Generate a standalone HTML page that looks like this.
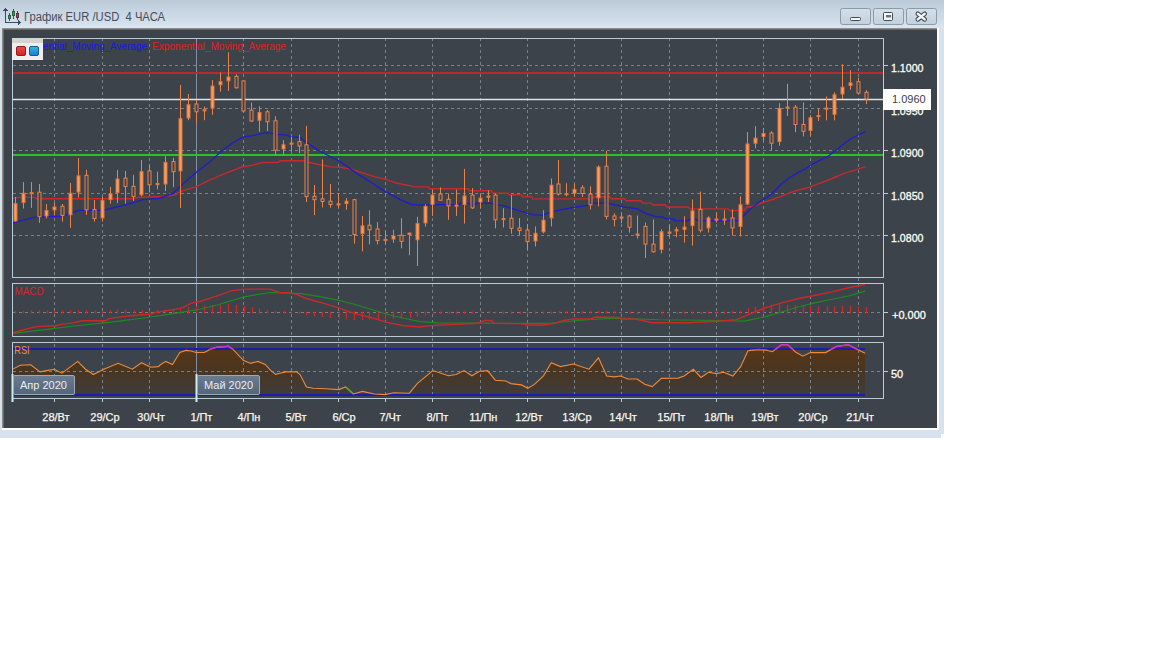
<!DOCTYPE html><html><head><meta charset="utf-8"><style>html,body{margin:0;padding:0;background:#fff;width:1152px;height:648px;overflow:hidden}svg{position:absolute;left:0;top:0}text{font-family:"Liberation Sans",sans-serif}</style></head><body>
<svg width="1152" height="648" viewBox="0 0 1152 648">
<defs><linearGradient id="tb" x1="0" y1="0" x2="0" y2="1"><stop offset="0" stop-color="#bccad8"/><stop offset="0.85" stop-color="#d4e0ec"/><stop offset="1" stop-color="#dbe7f1"/></linearGradient><linearGradient id="btn" x1="0" y1="0" x2="0" y2="1"><stop offset="0" stop-color="#d4dfe9"/><stop offset="1" stop-color="#c3d0dc"/></linearGradient><linearGradient id="rsif" x1="0" y1="0" x2="0" y2="1"><stop offset="0" stop-color="#5a3614"/><stop offset="0.5" stop-color="#4a3520"/><stop offset="1" stop-color="#3f3d3c"/></linearGradient><linearGradient id="lab" x1="0" y1="0" x2="0" y2="1"><stop offset="0" stop-color="#6a7b90"/><stop offset="1" stop-color="#566578"/></linearGradient><linearGradient id="sqr" x1="0" y1="0" x2="0" y2="1"><stop offset="0" stop-color="#f24a48"/><stop offset="1" stop-color="#d02028"/></linearGradient><linearGradient id="sqb" x1="0" y1="0" x2="0" y2="1"><stop offset="0" stop-color="#38b4ec"/><stop offset="1" stop-color="#1a80c0"/></linearGradient><clipPath id="cmain"><rect x="13" y="39" width="870" height="238"/></clipPath><clipPath id="cmacd"><rect x="13" y="284" width="870" height="52"/></clipPath><clipPath id="crsi"><rect x="13" y="343" width="870" height="55"/></clipPath></defs>
<rect x="0" y="0" width="944" height="434" fill="#d6e2ee"/><rect x="0" y="0" width="941" height="438" fill="#d6e2ee"/>
<rect x="0" y="0" width="944" height="28" fill="url(#tb)"/>
<rect x="2" y="28" width="937" height="402" fill="#ffffff"/>
<rect x="2" y="28" width="935" height="400" fill="#8e8c88"/>
<rect x="3" y="29" width="934" height="399" fill="#6a6864"/>
<rect x="4" y="30" width="933" height="398" fill="#3c434b"/>
<g fill="none" stroke-width="1" shape-rendering="crispEdges"><path d="M5.5 9 V22.5 H20" stroke="#3a4a60"/><path d="M3.5 11 L5.5 8.5 L7.5 11" stroke="#3a4a60"/><path d="M18 20.5 L20.5 22.5 L18 24.5" stroke="#3a4a60"/><path d="M9.5 13 V21" stroke="#2a6040"/><rect x="8.5" y="15.5" width="2" height="3" fill="#4a9a60" stroke="#2a6040"/><path d="M13.5 9 V19" stroke="#2a6040"/><rect x="12.5" y="11.5" width="2" height="4" fill="#4a9a60" stroke="#2a6040"/><path d="M17.5 11 V20" stroke="#603040"/><rect x="16.5" y="13.5" width="2" height="4" fill="#905060" stroke="#603040"/></g>
<text x="24" y="21" font-size="12.5" fill="#464c58" textLength="141" lengthAdjust="spacingAndGlyphs">График EUR /USD&#160; 4 ЧАСА</text>
<rect x="840.5" y="8.5" width="30" height="16" rx="2" fill="url(#btn)" stroke="#8d9aa8"/>
<rect x="873.5" y="8.5" width="30" height="16" rx="2" fill="url(#btn)" stroke="#8d9aa8"/>
<rect x="906.5" y="8.5" width="30" height="16" rx="2" fill="url(#btn)" stroke="#8d9aa8"/>
<rect x="850.5" y="17.5" width="10" height="3" rx="1" fill="#f4f6f8" stroke="#404850"/>
<rect x="883.5" y="12.5" width="9" height="8" rx="1" fill="#f4f6f8" stroke="#404850"/><rect x="886" y="15" width="5" height="2.5" fill="#6a7480"/>
<path d="M917.8 13.8 L924.7 19.4 M924.7 13.8 L917.8 19.4" stroke="#404850" stroke-width="4.6" stroke-linecap="round"/><path d="M917.8 13.8 L924.7 19.4 M924.7 13.8 L917.8 19.4" stroke="#f4f6f8" stroke-width="2.4" stroke-linecap="round"/>
<polygon points="12.6,369.2 20.4,365.3 30.8,364.8 40.0,371.9 46.5,370.6 54.3,369.2 62.0,373.2 77.7,361.4 85.5,369.2 93.3,374.5 103.8,369.2 118.0,363.3 132.4,369.2 141.5,362.7 150.6,367.2 158.4,366.6 160.0,365.0 165.7,361.4 172.5,364.5 179.8,352.5 186.0,350.4 191.2,351.0 196.0,352.5 204.3,352.5 211.0,348.9 216.2,347.3 224.6,346.8 228.2,346.2 233.0,349.4 243.3,360.3 250.6,363.4 257.9,361.4 265.2,364.5 270.4,370.2 275.6,374.4 280.0,373.3 286.0,371.9 296.5,371.9 300.0,374.5 306.5,387.0 313.0,388.3 326.0,388.8 339.0,389.6 345.6,387.0 353.4,394.0 362.5,391.4 374.2,394.0 385.0,394.6 393.8,392.7 409.4,393.2 417.2,383.6 432.8,370.6 448.4,375.8 456.2,374.5 464.0,370.6 471.9,375.8 479.7,371.3 487.5,370.6 495.3,380.2 505.7,381.0 511.0,383.6 521.4,384.9 527.9,388.3 534.4,384.4 543.5,375.8 551.3,362.7 560.4,366.6 573.4,364.0 589.0,369.2 598.5,357.8 606.7,376.0 614.3,376.9 620.4,376.0 628.0,379.0 637.1,379.0 644.7,384.2 652.3,386.6 661.4,378.4 678.1,378.1 684.2,376.0 693.3,369.3 701.0,377.5 708.5,372.3 716.1,373.6 723.7,372.3 732.9,376.0 740.5,366.9 748.0,350.8 758.7,349.6 766.3,350.2 772.4,351.7 781.5,344.7 787.6,344.7 795.2,351.7 802.8,356.2 810.4,352.6 825.6,352.6 836.2,346.5 848.4,344.7 857.5,349.6 865.1,353.2 865.1,394.0 12.6,394.0" fill="url(#rsif)" clip-path="url(#crsi)"/>
<g stroke="#78828c" stroke-width="1" stroke-dasharray="3,3" shape-rendering="crispEdges">
<line x1="54.5" y1="38" x2="54.5" y2="402"/><line x1="102.5" y1="38" x2="102.5" y2="402"/><line x1="149.5" y1="38" x2="149.5" y2="402"/><line x1="243.5" y1="38" x2="243.5" y2="402"/><line x1="291.5" y1="38" x2="291.5" y2="402"/><line x1="338.5" y1="38" x2="338.5" y2="402"/><line x1="385.5" y1="38" x2="385.5" y2="402"/><line x1="432.5" y1="38" x2="432.5" y2="402"/><line x1="480.5" y1="38" x2="480.5" y2="402"/><line x1="527.5" y1="38" x2="527.5" y2="402"/><line x1="574.5" y1="38" x2="574.5" y2="402"/><line x1="621.5" y1="38" x2="621.5" y2="402"/><line x1="669.5" y1="38" x2="669.5" y2="402"/><line x1="716.5" y1="38" x2="716.5" y2="402"/><line x1="763.5" y1="38" x2="763.5" y2="402"/><line x1="810.5" y1="38" x2="810.5" y2="402"/><line x1="858.5" y1="38" x2="858.5" y2="402"/>
<line x1="13" y1="65.5" x2="883" y2="65.5"/>
<line x1="13" y1="108.5" x2="883" y2="108.5"/>
<line x1="13" y1="150.5" x2="883" y2="150.5"/>
<line x1="13" y1="193.5" x2="883" y2="193.5"/>
<line x1="13" y1="235.5" x2="883" y2="235.5"/>
<line x1="13" y1="312.5" x2="883" y2="312.5"/>
<line x1="13" y1="371.5" x2="883" y2="371.5"/>
</g>
<line x1="196.5" y1="39" x2="196.5" y2="402" stroke="#8090a0" shape-rendering="crispEdges"/>
<g stroke="#b9cad9" shape-rendering="crispEdges">
<line x1="883" y1="65.5" x2="888" y2="65.5"/>
<line x1="883" y1="108.5" x2="888" y2="108.5"/>
<line x1="883" y1="150.5" x2="888" y2="150.5"/>
<line x1="883" y1="193.5" x2="888" y2="193.5"/>
<line x1="883" y1="235.5" x2="888" y2="235.5"/>
<line x1="883" y1="312.5" x2="888" y2="312.5"/><line x1="883" y1="371.5" x2="888" y2="371.5"/>
<line x1="54.5" y1="398" x2="54.5" y2="402"/>
<line x1="102.5" y1="398" x2="102.5" y2="402"/>
<line x1="149.5" y1="398" x2="149.5" y2="402"/>
<line x1="196.5" y1="398" x2="196.5" y2="402"/>
<line x1="243.5" y1="398" x2="243.5" y2="402"/>
<line x1="291.5" y1="398" x2="291.5" y2="402"/>
<line x1="338.5" y1="398" x2="338.5" y2="402"/>
<line x1="385.5" y1="398" x2="385.5" y2="402"/>
<line x1="432.5" y1="398" x2="432.5" y2="402"/>
<line x1="480.5" y1="398" x2="480.5" y2="402"/>
<line x1="527.5" y1="398" x2="527.5" y2="402"/>
<line x1="574.5" y1="398" x2="574.5" y2="402"/>
<line x1="621.5" y1="398" x2="621.5" y2="402"/>
<line x1="669.5" y1="398" x2="669.5" y2="402"/>
<line x1="716.5" y1="398" x2="716.5" y2="402"/>
<line x1="763.5" y1="398" x2="763.5" y2="402"/>
<line x1="810.5" y1="398" x2="810.5" y2="402"/>
<line x1="858.5" y1="398" x2="858.5" y2="402"/>
</g>
<g clip-path="url(#cmain)">
<line x1="13" y1="73" x2="883" y2="73" stroke="#b42a2e" stroke-width="2"/>
<line x1="13" y1="155" x2="883" y2="155" stroke="#2cc02c" stroke-width="2"/>
<line x1="13" y1="99.5" x2="883" y2="99.5" stroke="#dfe4e8" stroke-width="1.3"/>
<polyline points="12.0,198.7 17.8,197.4 34.7,197.4 36.0,198.7 133.7,198.7 137.6,197.4 160.0,196.5 173.1,195.4 182.4,190.8 196.3,186.7 210.2,179.8 225.2,173.4 242.6,166.8 253.0,165.1 262.6,162.5 278.2,162.5 280.0,160.8 304.2,160.8 309.4,162.5 319.9,164.7 332.0,166.9 340.0,167.3 351.3,169.1 361.7,172.6 374.7,176.9 385.1,179.1 396.4,183.0 407.7,185.2 413.8,186.9 428.4,186.9 429.4,188.8 468.2,188.8 469.3,190.8 491.9,190.8 492.7,192.9 508.3,193.3 509.0,194.8 521.6,194.8 522.3,196.8 531.7,196.8 532.5,198.8 589.7,198.9 595.0,196.7 609.7,196.7 611.4,198.7 624.4,198.7 626.2,200.8 641.0,200.8 642.7,203.1 651.4,203.1 653.1,205.0 665.3,204.8 666.7,207.0 688.2,207.0 690.1,208.9 728.3,208.9 730.2,211.0 744.6,210.0 746.5,207.2 753.2,206.2 760.0,203.5 771.1,200.0 782.2,195.8 794.7,191.0 808.6,187.5 819.7,183.3 832.2,178.5 843.3,173.6 857.2,169.4 865.6,166.7" fill="none" stroke="#c42a2e" stroke-width="1.4"/>
<polyline points="12.0,223.4 17.8,221.5 36.0,216.9 62.0,216.2 71.2,213.6 77.7,210.4 103.8,210.4 112.9,207.8 133.7,202.6 141.5,200.0 150.0,199.2 159.3,198.3 173.1,193.1 181.2,185.6 196.3,172.2 207.9,163.6 219.4,153.1 231.0,143.9 242.6,137.2 253.0,135.6 264.3,132.8 271.2,133.0 274.7,134.3 286.9,135.2 290.3,136.9 299.9,137.4 307.7,143.4 318.1,150.0 326.8,154.7 340.0,161.5 350.4,168.7 357.4,173.9 368.6,180.8 379.1,187.8 388.6,193.4 400.8,199.9 411.2,204.3 418.1,205.1 440.0,204.7 459.9,204.7 460.4,203.2 469.3,203.2 469.8,204.5 475.6,204.5 476.1,202.9 491.9,203.4 495.8,204.6 504.4,205.8 510.6,208.1 518.4,210.5 526.2,212.8 534.0,214.8 542.7,215.2 551.2,212.0 562.0,209.7 572.4,207.7 587.1,205.4 595.8,202.8 607.1,203.2 615.8,205.1 624.4,207.1 637.5,208.9 646.1,213.6 655.7,216.7 663.4,217.2 666.2,218.7 673.9,219.1 674.8,220.8 687.2,220.8 690.1,219.1 695.8,219.1 697.8,220.6 739.8,220.6 741.7,217.7 750.3,209.1 760.0,201.4 771.1,194.4 782.2,183.3 789.2,177.8 797.5,172.9 805.8,168.8 811.4,164.6 819.7,160.4 828.0,156.2 836.4,150.0 844.7,143.0 851.7,138.2 858.6,134.7 865.6,131.9" fill="none" stroke="#1c1cd0" stroke-width="1.25"/>
<rect x="15" y="197.0" width="1" height="24.6" fill="#e8844a"/>
<rect x="14" y="203.7" width="3" height="17.3" fill="#f6a062" stroke="#e0743a" stroke-width="1"/>
<rect x="23" y="182.1" width="1" height="26.5" fill="#e8844a"/>
<rect x="22" y="193.2" width="3" height="9.3" fill="#f6a062" stroke="#e0743a" stroke-width="1"/>
<rect x="31" y="182.1" width="1" height="25.7" fill="#e8844a"/>
<rect x="30" y="192.6" width="3" height="1.2" fill="#f6a062" stroke="#e0743a" stroke-width="1"/>
<rect x="39" y="184.0" width="1" height="38.8" fill="#e8844a"/>
<rect x="38" y="192.2" width="3" height="24.5" fill="#3c434b" stroke="#ec8448" stroke-width="1"/>
<rect x="46" y="204.0" width="1" height="14.5" fill="#e8844a"/>
<rect x="45" y="210.5" width="3" height="5.5" fill="#f6a062" stroke="#e0743a" stroke-width="1"/>
<rect x="54" y="202.8" width="1" height="12.6" fill="#e8844a"/>
<rect x="53" y="207.0" width="3" height="2.9" fill="#f6a062" stroke="#e0743a" stroke-width="1"/>
<rect x="62" y="204.0" width="1" height="17.6" fill="#e8844a"/>
<rect x="61" y="206.2" width="3" height="9.2" fill="#3c434b" stroke="#ec8448" stroke-width="1"/>
<rect x="70" y="183.0" width="1" height="44.8" fill="#e8844a"/>
<rect x="69" y="193.2" width="3" height="21.6" fill="#f6a062" stroke="#e0743a" stroke-width="1"/>
<rect x="78" y="158.0" width="1" height="39.5" fill="#e8844a"/>
<rect x="77" y="175.9" width="3" height="16.1" fill="#f6a062" stroke="#e0743a" stroke-width="1"/>
<rect x="86" y="169.8" width="1" height="45.0" fill="#e8844a"/>
<rect x="85" y="175.3" width="3" height="34.6" fill="#3c434b" stroke="#ec8448" stroke-width="1"/>
<rect x="94" y="200.0" width="1" height="21.6" fill="#e8844a"/>
<rect x="93" y="209.5" width="3" height="9.0" fill="#3c434b" stroke="#ec8448" stroke-width="1"/>
<rect x="102" y="196.9" width="1" height="24.7" fill="#e8844a"/>
<rect x="101" y="200.6" width="3" height="17.3" fill="#f6a062" stroke="#e0743a" stroke-width="1"/>
<rect x="110" y="187.0" width="1" height="16.7" fill="#e8844a"/>
<rect x="109" y="193.8" width="3" height="5.6" fill="#f6a062" stroke="#e0743a" stroke-width="1"/>
<rect x="117" y="169.8" width="1" height="33.2" fill="#e8844a"/>
<rect x="116" y="179.0" width="3" height="13.6" fill="#f6a062" stroke="#e0743a" stroke-width="1"/>
<rect x="125" y="171.0" width="1" height="32.7" fill="#e8844a"/>
<rect x="124" y="178.1" width="3" height="8.3" fill="#3c434b" stroke="#ec8448" stroke-width="1"/>
<rect x="133" y="174.8" width="1" height="26.2" fill="#e8844a"/>
<rect x="132" y="186.3" width="3" height="10.1" fill="#3c434b" stroke="#ec8448" stroke-width="1"/>
<rect x="141" y="160.0" width="1" height="36.4" fill="#e8844a"/>
<rect x="140" y="171.7" width="3" height="23.1" fill="#f6a062" stroke="#e0743a" stroke-width="1"/>
<rect x="149" y="164.7" width="1" height="27.8" fill="#e8844a"/>
<rect x="148" y="170.9" width="3" height="13.9" fill="#3c434b" stroke="#ec8448" stroke-width="1"/>
<rect x="157" y="171.7" width="1" height="17.7" fill="#e8844a"/>
<rect x="156" y="183.5" width="3" height="1.2" fill="#f6a062" stroke="#e0743a" stroke-width="1"/>
<rect x="165" y="156.2" width="1" height="34.8" fill="#e8844a"/>
<rect x="164" y="162.4" width="3" height="21.6" fill="#f6a062" stroke="#e0743a" stroke-width="1"/>
<rect x="173" y="157.8" width="1" height="29.3" fill="#e8844a"/>
<rect x="172" y="161.6" width="3" height="10.1" fill="#3c434b" stroke="#ec8448" stroke-width="1"/>
<rect x="180" y="84.8" width="1" height="123.1" fill="#e8844a"/>
<rect x="179" y="118.7" width="3" height="52.2" fill="#f6a062" stroke="#e0743a" stroke-width="1"/>
<rect x="188" y="94.0" width="1" height="26.2" fill="#e8844a"/>
<rect x="187" y="104.8" width="3" height="13.2" fill="#f6a062" stroke="#e0743a" stroke-width="1"/>
<rect x="196" y="100.2" width="1" height="23.1" fill="#e8844a"/>
<rect x="195" y="104.0" width="3" height="7.8" fill="#3c434b" stroke="#ec8448" stroke-width="1"/>
<rect x="204" y="106.4" width="1" height="13.8" fill="#e8844a"/>
<rect x="203" y="109.7" width="3" height="1.2" fill="#f6a062" stroke="#e0743a" stroke-width="1"/>
<rect x="212" y="80.1" width="1" height="34.7" fill="#e8844a"/>
<rect x="211" y="86.0" width="3" height="21.9" fill="#f6a062" stroke="#e0743a" stroke-width="1"/>
<rect x="220" y="72.4" width="1" height="19.3" fill="#e8844a"/>
<rect x="219" y="81.7" width="3" height="3.1" fill="#f6a062" stroke="#e0743a" stroke-width="1"/>
<rect x="228" y="52.3" width="1" height="38.6" fill="#e8844a"/>
<rect x="227" y="77.0" width="3" height="3.9" fill="#f6a062" stroke="#e0743a" stroke-width="1"/>
<rect x="236" y="74.3" width="1" height="14.3" fill="#e8844a"/>
<rect x="235" y="76.3" width="3" height="11.5" fill="#3c434b" stroke="#ec8448" stroke-width="1"/>
<rect x="243" y="80.9" width="1" height="31.6" fill="#e8844a"/>
<rect x="242" y="80.9" width="3" height="30.1" fill="#3c434b" stroke="#ec8448" stroke-width="1"/>
<rect x="251" y="102.5" width="1" height="19.3" fill="#e8844a"/>
<rect x="250" y="110.2" width="3" height="10.8" fill="#3c434b" stroke="#ec8448" stroke-width="1"/>
<rect x="259" y="106.4" width="1" height="25.4" fill="#e8844a"/>
<rect x="258" y="112.5" width="3" height="7.7" fill="#f6a062" stroke="#e0743a" stroke-width="1"/>
<rect x="267" y="110.2" width="1" height="20.8" fill="#e8844a"/>
<rect x="266" y="111.8" width="3" height="10.0" fill="#3c434b" stroke="#ec8448" stroke-width="1"/>
<rect x="275" y="116.2" width="1" height="38.6" fill="#e8844a"/>
<rect x="274" y="120.8" width="3" height="29.4" fill="#3c434b" stroke="#ec8448" stroke-width="1"/>
<rect x="283" y="140.1" width="1" height="14.7" fill="#e8844a"/>
<rect x="282" y="144.8" width="3" height="4.2" fill="#f6a062" stroke="#e0743a" stroke-width="1"/>
<rect x="291" y="137.0" width="1" height="14.7" fill="#e8844a"/>
<rect x="290" y="143.0" width="3" height="1.2" fill="#f6a062" stroke="#e0743a" stroke-width="1"/>
<rect x="299" y="134.7" width="1" height="18.5" fill="#e8844a"/>
<rect x="298" y="141.7" width="3" height="4.3" fill="#3c434b" stroke="#ec8448" stroke-width="1"/>
<rect x="306" y="125.9" width="1" height="76.1" fill="#e8844a"/>
<rect x="305" y="144.8" width="3" height="51.8" fill="#3c434b" stroke="#ec8448" stroke-width="1"/>
<rect x="314" y="185.0" width="1" height="30.1" fill="#e8844a"/>
<rect x="313" y="196.3" width="3" height="3.4" fill="#3c434b" stroke="#ec8448" stroke-width="1"/>
<rect x="322" y="159.4" width="1" height="48.0" fill="#e8844a"/>
<rect x="321" y="198.9" width="3" height="2.6" fill="#3c434b" stroke="#ec8448" stroke-width="1"/>
<rect x="330" y="184.0" width="1" height="23.7" fill="#e8844a"/>
<rect x="329" y="201.2" width="3" height="3.4" fill="#3c434b" stroke="#ec8448" stroke-width="1"/>
<rect x="338" y="193.5" width="1" height="14.7" fill="#e8844a"/>
<rect x="337" y="203.8" width="3" height="1.2" fill="#f6a062" stroke="#e0743a" stroke-width="1"/>
<rect x="346" y="198.1" width="1" height="11.6" fill="#e8844a"/>
<rect x="345" y="201.2" width="3" height="2.3" fill="#f6a062" stroke="#e0743a" stroke-width="1"/>
<rect x="354" y="198.9" width="1" height="44.8" fill="#e8844a"/>
<rect x="353" y="199.7" width="3" height="34.7" fill="#3c434b" stroke="#ec8448" stroke-width="1"/>
<rect x="362" y="215.9" width="1" height="35.5" fill="#e8844a"/>
<rect x="361" y="225.9" width="3" height="7.7" fill="#f6a062" stroke="#e0743a" stroke-width="1"/>
<rect x="369" y="210.2" width="1" height="34.2" fill="#e8844a"/>
<rect x="368" y="225.2" width="3" height="4.6" fill="#3c434b" stroke="#ec8448" stroke-width="1"/>
<rect x="377" y="222.1" width="1" height="22.3" fill="#e8844a"/>
<rect x="376" y="229.0" width="3" height="11.6" fill="#3c434b" stroke="#ec8448" stroke-width="1"/>
<rect x="385" y="230.6" width="1" height="13.8" fill="#e8844a"/>
<rect x="384" y="239.3" width="3" height="1.2" fill="#f6a062" stroke="#e0743a" stroke-width="1"/>
<rect x="393" y="229.8" width="1" height="13.1" fill="#e8844a"/>
<rect x="392" y="236.0" width="3" height="3.0" fill="#f6a062" stroke="#e0743a" stroke-width="1"/>
<rect x="401" y="218.2" width="1" height="30.1" fill="#e8844a"/>
<rect x="400" y="235.2" width="3" height="6.2" fill="#3c434b" stroke="#ec8448" stroke-width="1"/>
<rect x="409" y="232.9" width="1" height="22.3" fill="#e8844a"/>
<rect x="408" y="233.0" width="3" height="1.5" fill="#f6a062" stroke="#e0743a" stroke-width="1"/>
<rect x="417" y="216.7" width="1" height="49.3" fill="#e8844a"/>
<rect x="416" y="223.6" width="3" height="16.2" fill="#f6a062" stroke="#e0743a" stroke-width="1"/>
<rect x="425" y="204.4" width="1" height="22.3" fill="#e8844a"/>
<rect x="424" y="206.4" width="3" height="16.5" fill="#f6a062" stroke="#e0743a" stroke-width="1"/>
<rect x="432" y="189.7" width="1" height="26.2" fill="#e8844a"/>
<rect x="431" y="195.1" width="3" height="9.3" fill="#f6a062" stroke="#e0743a" stroke-width="1"/>
<rect x="440" y="187.4" width="1" height="13.1" fill="#e8844a"/>
<rect x="439" y="194.0" width="3" height="6.2" fill="#3c434b" stroke="#ec8448" stroke-width="1"/>
<rect x="448" y="193.5" width="1" height="26.3" fill="#e8844a"/>
<rect x="447" y="199.3" width="3" height="6.6" fill="#3c434b" stroke="#ec8448" stroke-width="1"/>
<rect x="456" y="189.7" width="1" height="26.2" fill="#e8844a"/>
<rect x="455" y="205.0" width="3" height="1.2" fill="#f6a062" stroke="#e0743a" stroke-width="1"/>
<rect x="464" y="168.9" width="1" height="54.7" fill="#e8844a"/>
<rect x="463" y="195.9" width="3" height="8.5" fill="#f6a062" stroke="#e0743a" stroke-width="1"/>
<rect x="472" y="188.1" width="1" height="20.9" fill="#e8844a"/>
<rect x="471" y="195.1" width="3" height="12.8" fill="#3c434b" stroke="#ec8448" stroke-width="1"/>
<rect x="480" y="193.5" width="1" height="14.7" fill="#e8844a"/>
<rect x="479" y="198.2" width="3" height="3.8" fill="#f6a062" stroke="#e0743a" stroke-width="1"/>
<rect x="488" y="190.5" width="1" height="11.5" fill="#e8844a"/>
<rect x="487" y="196.0" width="3" height="1.2" fill="#f6a062" stroke="#e0743a" stroke-width="1"/>
<rect x="495" y="193.5" width="1" height="34.8" fill="#e8844a"/>
<rect x="494" y="195.1" width="3" height="24.7" fill="#3c434b" stroke="#ec8448" stroke-width="1"/>
<rect x="503" y="208.2" width="1" height="19.3" fill="#e8844a"/>
<rect x="502" y="218.5" width="3" height="1.2" fill="#f6a062" stroke="#e0743a" stroke-width="1"/>
<rect x="511" y="195.1" width="1" height="38.6" fill="#e8844a"/>
<rect x="510" y="218.2" width="3" height="10.1" fill="#3c434b" stroke="#ec8448" stroke-width="1"/>
<rect x="519" y="218.2" width="1" height="17.0" fill="#e8844a"/>
<rect x="518" y="228.0" width="3" height="2.6" fill="#3c434b" stroke="#ec8448" stroke-width="1"/>
<rect x="527" y="224.2" width="1" height="25.7" fill="#e8844a"/>
<rect x="526" y="230.0" width="3" height="11.6" fill="#3c434b" stroke="#ec8448" stroke-width="1"/>
<rect x="535" y="226.4" width="1" height="20.1" fill="#e8844a"/>
<rect x="534" y="233.3" width="3" height="7.7" fill="#f6a062" stroke="#e0743a" stroke-width="1"/>
<rect x="543" y="210.2" width="1" height="23.1" fill="#e8844a"/>
<rect x="542" y="220.2" width="3" height="11.6" fill="#f6a062" stroke="#e0743a" stroke-width="1"/>
<rect x="551" y="178.5" width="1" height="47.9" fill="#e8844a"/>
<rect x="550" y="185.2" width="3" height="32.7" fill="#f6a062" stroke="#e0743a" stroke-width="1"/>
<rect x="558" y="160.0" width="1" height="35.5" fill="#e8844a"/>
<rect x="557" y="184.0" width="3" height="10.0" fill="#3c434b" stroke="#ec8448" stroke-width="1"/>
<rect x="566" y="183.2" width="1" height="13.1" fill="#e8844a"/>
<rect x="565" y="193.5" width="3" height="1.2" fill="#f6a062" stroke="#e0743a" stroke-width="1"/>
<rect x="574" y="184.0" width="1" height="13.0" fill="#e8844a"/>
<rect x="573" y="189.4" width="3" height="3.8" fill="#f6a062" stroke="#e0743a" stroke-width="1"/>
<rect x="582" y="185.2" width="1" height="11.8" fill="#e8844a"/>
<rect x="581" y="187.8" width="3" height="5.7" fill="#3c434b" stroke="#ec8448" stroke-width="1"/>
<rect x="590" y="186.3" width="1" height="23.1" fill="#e8844a"/>
<rect x="589" y="194.0" width="3" height="10.8" fill="#3c434b" stroke="#ec8448" stroke-width="1"/>
<rect x="598" y="165.4" width="1" height="40.9" fill="#e8844a"/>
<rect x="597" y="167.0" width="3" height="30.8" fill="#f6a062" stroke="#e0743a" stroke-width="1"/>
<rect x="606" y="150.8" width="1" height="68.6" fill="#e8844a"/>
<rect x="605" y="166.2" width="3" height="50.2" fill="#3c434b" stroke="#ec8448" stroke-width="1"/>
<rect x="614" y="213.3" width="1" height="13.1" fill="#e8844a"/>
<rect x="613" y="216.0" width="3" height="3.4" fill="#3c434b" stroke="#ec8448" stroke-width="1"/>
<rect x="621" y="212.5" width="1" height="10.8" fill="#e8844a"/>
<rect x="620" y="217.0" width="3" height="1.2" fill="#f6a062" stroke="#e0743a" stroke-width="1"/>
<rect x="629" y="214.8" width="1" height="17.8" fill="#e8844a"/>
<rect x="628" y="216.0" width="3" height="11.2" fill="#3c434b" stroke="#ec8448" stroke-width="1"/>
<rect x="637" y="215.6" width="1" height="23.1" fill="#e8844a"/>
<rect x="636" y="234.0" width="3" height="1.2" fill="#f6a062" stroke="#e0743a" stroke-width="1"/>
<rect x="645" y="222.5" width="1" height="35.5" fill="#e8844a"/>
<rect x="644" y="226.4" width="3" height="17.7" fill="#3c434b" stroke="#ec8448" stroke-width="1"/>
<rect x="653" y="219.4" width="1" height="33.2" fill="#e8844a"/>
<rect x="652" y="244.1" width="3" height="7.7" fill="#3c434b" stroke="#ec8448" stroke-width="1"/>
<rect x="661" y="229.4" width="1" height="24.0" fill="#e8844a"/>
<rect x="660" y="231.8" width="3" height="17.7" fill="#f6a062" stroke="#e0743a" stroke-width="1"/>
<rect x="669" y="224.8" width="1" height="12.4" fill="#e8844a"/>
<rect x="668" y="232.0" width="3" height="1.2" fill="#f6a062" stroke="#e0743a" stroke-width="1"/>
<rect x="676" y="227.1" width="1" height="10.1" fill="#e8844a"/>
<rect x="675" y="229.7" width="3" height="1.2" fill="#f6a062" stroke="#e0743a" stroke-width="1"/>
<rect x="684" y="216.3" width="1" height="26.3" fill="#e8844a"/>
<rect x="683" y="227.1" width="3" height="2.3" fill="#f6a062" stroke="#e0743a" stroke-width="1"/>
<rect x="692" y="199.4" width="1" height="46.2" fill="#e8844a"/>
<rect x="691" y="210.9" width="3" height="14.7" fill="#f6a062" stroke="#e0743a" stroke-width="1"/>
<rect x="700" y="191.6" width="1" height="40.9" fill="#e8844a"/>
<rect x="699" y="209.4" width="3" height="20.8" fill="#3c434b" stroke="#ec8448" stroke-width="1"/>
<rect x="708" y="216.3" width="1" height="16.2" fill="#e8844a"/>
<rect x="707" y="217.9" width="3" height="10.0" fill="#f6a062" stroke="#e0743a" stroke-width="1"/>
<rect x="716" y="212.5" width="1" height="10.0" fill="#e8844a"/>
<rect x="715" y="219.0" width="3" height="1.2" fill="#f6a062" stroke="#e0743a" stroke-width="1"/>
<rect x="724" y="210.2" width="1" height="14.6" fill="#e8844a"/>
<rect x="723" y="219.0" width="3" height="1.2" fill="#f6a062" stroke="#e0743a" stroke-width="1"/>
<rect x="732" y="209.4" width="1" height="26.2" fill="#e8844a"/>
<rect x="731" y="217.9" width="3" height="10.0" fill="#3c434b" stroke="#ec8448" stroke-width="1"/>
<rect x="740" y="196.3" width="1" height="40.1" fill="#e8844a"/>
<rect x="739" y="204.8" width="3" height="21.6" fill="#f6a062" stroke="#e0743a" stroke-width="1"/>
<rect x="747" y="132.0" width="1" height="73.0" fill="#e8844a"/>
<rect x="746" y="144.0" width="3" height="60.0" fill="#f6a062" stroke="#e0743a" stroke-width="1"/>
<rect x="755" y="126.2" width="1" height="22.1" fill="#e8844a"/>
<rect x="754" y="138.1" width="3" height="5.1" fill="#f6a062" stroke="#e0743a" stroke-width="1"/>
<rect x="763" y="127.9" width="1" height="13.6" fill="#e8844a"/>
<rect x="762" y="133.5" width="3" height="3.0" fill="#f6a062" stroke="#e0743a" stroke-width="1"/>
<rect x="771" y="131.3" width="1" height="18.7" fill="#e8844a"/>
<rect x="770" y="133.0" width="3" height="10.2" fill="#3c434b" stroke="#ec8448" stroke-width="1"/>
<rect x="779" y="103.3" width="1" height="42.4" fill="#e8844a"/>
<rect x="778" y="108.4" width="3" height="33.1" fill="#f6a062" stroke="#e0743a" stroke-width="1"/>
<rect x="787" y="83.8" width="1" height="32.2" fill="#e8844a"/>
<rect x="786" y="107.0" width="3" height="1.2" fill="#f6a062" stroke="#e0743a" stroke-width="1"/>
<rect x="795" y="105.0" width="1" height="27.2" fill="#e8844a"/>
<rect x="794" y="107.2" width="3" height="17.3" fill="#3c434b" stroke="#ec8448" stroke-width="1"/>
<rect x="803" y="102.4" width="1" height="34.0" fill="#e8844a"/>
<rect x="802" y="124.5" width="3" height="6.8" fill="#3c434b" stroke="#ec8448" stroke-width="1"/>
<rect x="810" y="115.2" width="1" height="21.2" fill="#e8844a"/>
<rect x="809" y="117.7" width="3" height="12.8" fill="#f6a062" stroke="#e0743a" stroke-width="1"/>
<rect x="818" y="108.4" width="1" height="12.7" fill="#e8844a"/>
<rect x="817" y="115.5" width="3" height="1.2" fill="#f6a062" stroke="#e0743a" stroke-width="1"/>
<rect x="826" y="96.5" width="1" height="23.8" fill="#e8844a"/>
<rect x="825" y="108.0" width="3" height="1.2" fill="#f6a062" stroke="#e0743a" stroke-width="1"/>
<rect x="834" y="92.3" width="1" height="28.0" fill="#e8844a"/>
<rect x="833" y="94.8" width="3" height="19.5" fill="#f6a062" stroke="#e0743a" stroke-width="1"/>
<rect x="842" y="64.2" width="1" height="34.8" fill="#e8844a"/>
<rect x="841" y="87.2" width="3" height="6.8" fill="#f6a062" stroke="#e0743a" stroke-width="1"/>
<rect x="850" y="70.2" width="1" height="19.5" fill="#e8844a"/>
<rect x="849" y="82.9" width="3" height="2.6" fill="#f6a062" stroke="#e0743a" stroke-width="1"/>
<rect x="858" y="77.8" width="1" height="16.2" fill="#e8844a"/>
<rect x="857" y="81.7" width="3" height="11.4" fill="#3c434b" stroke="#ec8448" stroke-width="1"/>
<rect x="866" y="90.2" width="1" height="13.9" fill="#e8844a"/>
<rect x="865" y="92.3" width="3" height="6.7" fill="#3c434b" stroke="#ec8448" stroke-width="1"/>
</g>
<g clip-path="url(#cmacd)">
<line x1="15.5" y1="313.5" x2="15.5" y2="310.9" stroke="#d02626" stroke-width="1.4"/>
<line x1="23.5" y1="313.5" x2="23.5" y2="310.9" stroke="#d02626" stroke-width="1.4"/>
<line x1="31.5" y1="313.5" x2="31.5" y2="310.3" stroke="#d02626" stroke-width="1.4"/>
<line x1="39.5" y1="313.5" x2="39.5" y2="309.8" stroke="#d02626" stroke-width="1.4"/>
<line x1="47.5" y1="313.5" x2="47.5" y2="310.4" stroke="#d02626" stroke-width="1.4"/>
<line x1="54.5" y1="313.5" x2="54.5" y2="310.9" stroke="#d02626" stroke-width="1.4"/>
<line x1="62.5" y1="313.5" x2="62.5" y2="310.5" stroke="#d02626" stroke-width="1.4"/>
<line x1="70.5" y1="313.5" x2="70.5" y2="310.5" stroke="#d02626" stroke-width="1.4"/>
<line x1="78.5" y1="313.5" x2="78.5" y2="309.9" stroke="#d02626" stroke-width="1.4"/>
<line x1="86.5" y1="313.5" x2="86.5" y2="309.9" stroke="#d02626" stroke-width="1.4"/>
<line x1="95.5" y1="313.5" x2="95.5" y2="310.7" stroke="#d02626" stroke-width="1.4"/>
<line x1="102.5" y1="313.5" x2="102.5" y2="310.9" stroke="#d02626" stroke-width="1.4"/>
<line x1="110.5" y1="313.5" x2="110.5" y2="309.9" stroke="#d02626" stroke-width="1.4"/>
<line x1="117.5" y1="313.5" x2="117.5" y2="309.7" stroke="#d02626" stroke-width="1.4"/>
<line x1="125.5" y1="313.5" x2="125.5" y2="309.7" stroke="#d02626" stroke-width="1.4"/>
<line x1="134.5" y1="313.5" x2="134.5" y2="309.9" stroke="#d02626" stroke-width="1.4"/>
<line x1="142.5" y1="313.5" x2="142.5" y2="310.1" stroke="#d02626" stroke-width="1.4"/>
<line x1="149.5" y1="313.5" x2="149.5" y2="310.8" stroke="#d02626" stroke-width="1.4"/>
<line x1="157.5" y1="313.5" x2="157.5" y2="309.8" stroke="#d02626" stroke-width="1.4"/>
<line x1="165.5" y1="313.5" x2="165.5" y2="309.7" stroke="#d02626" stroke-width="1.4"/>
<line x1="173.5" y1="313.5" x2="173.5" y2="309.6" stroke="#d02626" stroke-width="1.4"/>
<line x1="180.5" y1="313.5" x2="180.5" y2="309.5" stroke="#d02626" stroke-width="1.4"/>
<line x1="188.5" y1="313.5" x2="188.5" y2="307.2" stroke="#d02626" stroke-width="1.4"/>
<line x1="196.5" y1="313.5" x2="196.5" y2="306.1" stroke="#d02626" stroke-width="1.4"/>
<line x1="204.5" y1="313.5" x2="204.5" y2="305.7" stroke="#d02626" stroke-width="1.4"/>
<line x1="212.5" y1="313.5" x2="212.5" y2="305.0" stroke="#d02626" stroke-width="1.4"/>
<line x1="220.5" y1="313.5" x2="220.5" y2="304.4" stroke="#d02626" stroke-width="1.4"/>
<line x1="228.5" y1="313.5" x2="228.5" y2="304.0" stroke="#d02626" stroke-width="1.4"/>
<line x1="236.5" y1="313.5" x2="236.5" y2="304.7" stroke="#d02626" stroke-width="1.4"/>
<line x1="244.5" y1="313.5" x2="244.5" y2="305.9" stroke="#d02626" stroke-width="1.4"/>
<line x1="252.5" y1="313.5" x2="252.5" y2="307.2" stroke="#d02626" stroke-width="1.4"/>
<line x1="259.5" y1="313.5" x2="259.5" y2="308.5" stroke="#d02626" stroke-width="1.4"/>
<line x1="267.5" y1="313.5" x2="267.5" y2="309.8" stroke="#d02626" stroke-width="1.4"/>
<line x1="275.5" y1="313.5" x2="275.5" y2="310.9" stroke="#d02626" stroke-width="1.4"/>
<line x1="284.5" y1="313.5" x2="284.5" y2="310.9" stroke="#d02626" stroke-width="1.4"/>
<line x1="291.5" y1="311.5" x2="291.5" y2="314.1" stroke="#d02626" stroke-width="1.4"/>
<line x1="299.5" y1="311.5" x2="299.5" y2="314.1" stroke="#d02626" stroke-width="1.4"/>
<line x1="306.5" y1="311.5" x2="306.5" y2="315.4" stroke="#d02626" stroke-width="1.4"/>
<line x1="314.5" y1="311.5" x2="314.5" y2="316.3" stroke="#d02626" stroke-width="1.4"/>
<line x1="322.5" y1="311.5" x2="322.5" y2="317.2" stroke="#d02626" stroke-width="1.4"/>
<line x1="330.5" y1="311.5" x2="330.5" y2="318.0" stroke="#d02626" stroke-width="1.4"/>
<line x1="339.5" y1="311.5" x2="339.5" y2="318.8" stroke="#d02626" stroke-width="1.4"/>
<line x1="346.5" y1="311.5" x2="346.5" y2="319.6" stroke="#d02626" stroke-width="1.4"/>
<line x1="354.5" y1="311.5" x2="354.5" y2="320.3" stroke="#d02626" stroke-width="1.4"/>
<line x1="362.5" y1="311.5" x2="362.5" y2="320.0" stroke="#d02626" stroke-width="1.4"/>
<line x1="369.5" y1="311.5" x2="369.5" y2="319.7" stroke="#d02626" stroke-width="1.4"/>
<line x1="378.5" y1="311.5" x2="378.5" y2="319.6" stroke="#d02626" stroke-width="1.4"/>
<line x1="385.5" y1="311.5" x2="385.5" y2="319.5" stroke="#d02626" stroke-width="1.4"/>
<line x1="393.5" y1="311.5" x2="393.5" y2="319.2" stroke="#d02626" stroke-width="1.4"/>
<line x1="401.5" y1="311.5" x2="401.5" y2="318.8" stroke="#d02626" stroke-width="1.4"/>
<line x1="410.5" y1="311.5" x2="410.5" y2="318.0" stroke="#d02626" stroke-width="1.4"/>
<line x1="417.5" y1="311.5" x2="417.5" y2="317.0" stroke="#d02626" stroke-width="1.4"/>
<line x1="425.5" y1="311.5" x2="425.5" y2="315.5" stroke="#d02626" stroke-width="1.4"/>
<line x1="433.5" y1="311.5" x2="433.5" y2="314.2" stroke="#d02626" stroke-width="1.4"/>
<line x1="440.5" y1="311.5" x2="440.5" y2="314.1" stroke="#d02626" stroke-width="1.4"/>
<line x1="449.5" y1="311.5" x2="449.5" y2="314.1" stroke="#d02626" stroke-width="1.4"/>
<line x1="456.5" y1="311.5" x2="456.5" y2="314.1" stroke="#d02626" stroke-width="1.4"/>
<line x1="464.5" y1="311.5" x2="464.5" y2="314.1" stroke="#d02626" stroke-width="1.4"/>
<line x1="472.5" y1="311.5" x2="472.5" y2="314.1" stroke="#d02626" stroke-width="1.4"/>
<line x1="481.5" y1="313.5" x2="481.5" y2="310.9" stroke="#d02626" stroke-width="1.4"/>
<line x1="489.5" y1="313.5" x2="489.5" y2="310.9" stroke="#d02626" stroke-width="1.4"/>
<line x1="495.5" y1="311.5" x2="495.5" y2="314.1" stroke="#d02626" stroke-width="1.4"/>
<line x1="503.5" y1="311.5" x2="503.5" y2="314.1" stroke="#d02626" stroke-width="1.4"/>
<line x1="511.5" y1="311.5" x2="511.5" y2="314.1" stroke="#d02626" stroke-width="1.4"/>
<line x1="520.5" y1="311.5" x2="520.5" y2="314.1" stroke="#d02626" stroke-width="1.4"/>
<line x1="527.5" y1="311.5" x2="527.5" y2="314.1" stroke="#d02626" stroke-width="1.4"/>
<line x1="535.5" y1="311.5" x2="535.5" y2="314.1" stroke="#d02626" stroke-width="1.4"/>
<line x1="543.5" y1="311.5" x2="543.5" y2="314.1" stroke="#d02626" stroke-width="1.4"/>
<line x1="551.5" y1="311.5" x2="551.5" y2="314.1" stroke="#d02626" stroke-width="1.4"/>
<line x1="559.5" y1="313.5" x2="559.5" y2="310.9" stroke="#d02626" stroke-width="1.4"/>
<line x1="566.5" y1="313.5" x2="566.5" y2="310.9" stroke="#d02626" stroke-width="1.4"/>
<line x1="574.5" y1="313.5" x2="574.5" y2="310.9" stroke="#d02626" stroke-width="1.4"/>
<line x1="582.5" y1="313.5" x2="582.5" y2="310.9" stroke="#d02626" stroke-width="1.4"/>
<line x1="590.5" y1="313.5" x2="590.5" y2="310.9" stroke="#d02626" stroke-width="1.4"/>
<line x1="598.5" y1="313.5" x2="598.5" y2="310.9" stroke="#d02626" stroke-width="1.4"/>
<line x1="606.5" y1="313.5" x2="606.5" y2="310.9" stroke="#d02626" stroke-width="1.4"/>
<line x1="614.5" y1="313.5" x2="614.5" y2="310.9" stroke="#d02626" stroke-width="1.4"/>
<line x1="621.5" y1="311.5" x2="621.5" y2="314.1" stroke="#d02626" stroke-width="1.4"/>
<line x1="630.5" y1="311.5" x2="630.5" y2="314.1" stroke="#d02626" stroke-width="1.4"/>
<line x1="637.5" y1="311.5" x2="637.5" y2="314.1" stroke="#d02626" stroke-width="1.4"/>
<line x1="645.5" y1="311.5" x2="645.5" y2="314.1" stroke="#d02626" stroke-width="1.4"/>
<line x1="653.5" y1="311.5" x2="653.5" y2="314.4" stroke="#d02626" stroke-width="1.4"/>
<line x1="662.5" y1="311.5" x2="662.5" y2="314.2" stroke="#d02626" stroke-width="1.4"/>
<line x1="669.5" y1="311.5" x2="669.5" y2="314.1" stroke="#d02626" stroke-width="1.4"/>
<line x1="677.5" y1="311.5" x2="677.5" y2="314.1" stroke="#d02626" stroke-width="1.4"/>
<line x1="684.5" y1="311.5" x2="684.5" y2="314.1" stroke="#d02626" stroke-width="1.4"/>
<line x1="692.5" y1="311.5" x2="692.5" y2="314.1" stroke="#d02626" stroke-width="1.4"/>
<line x1="701.5" y1="311.5" x2="701.5" y2="314.1" stroke="#d02626" stroke-width="1.4"/>
<line x1="708.5" y1="311.5" x2="708.5" y2="314.1" stroke="#d02626" stroke-width="1.4"/>
<line x1="716.5" y1="311.5" x2="716.5" y2="314.1" stroke="#d02626" stroke-width="1.4"/>
<line x1="724.5" y1="311.5" x2="724.5" y2="314.1" stroke="#d02626" stroke-width="1.4"/>
<line x1="732.5" y1="313.5" x2="732.5" y2="310.9" stroke="#d02626" stroke-width="1.4"/>
<line x1="740.5" y1="313.5" x2="740.5" y2="310.7" stroke="#d02626" stroke-width="1.4"/>
<line x1="748.5" y1="313.5" x2="748.5" y2="308.2" stroke="#d02626" stroke-width="1.4"/>
<line x1="755.5" y1="313.5" x2="755.5" y2="306.7" stroke="#d02626" stroke-width="1.4"/>
<line x1="763.5" y1="313.5" x2="763.5" y2="305.2" stroke="#d02626" stroke-width="1.4"/>
<line x1="771.5" y1="313.5" x2="771.5" y2="304.6" stroke="#d02626" stroke-width="1.4"/>
<line x1="779.5" y1="313.5" x2="779.5" y2="304.6" stroke="#d02626" stroke-width="1.4"/>
<line x1="787.5" y1="313.5" x2="787.5" y2="304.8" stroke="#d02626" stroke-width="1.4"/>
<line x1="795.5" y1="313.5" x2="795.5" y2="305.3" stroke="#d02626" stroke-width="1.4"/>
<line x1="803.5" y1="313.5" x2="803.5" y2="305.7" stroke="#d02626" stroke-width="1.4"/>
<line x1="810.5" y1="313.5" x2="810.5" y2="306.0" stroke="#d02626" stroke-width="1.4"/>
<line x1="818.5" y1="313.5" x2="818.5" y2="306.3" stroke="#d02626" stroke-width="1.4"/>
<line x1="827.5" y1="313.5" x2="827.5" y2="306.3" stroke="#d02626" stroke-width="1.4"/>
<line x1="834.5" y1="313.5" x2="834.5" y2="306.2" stroke="#d02626" stroke-width="1.4"/>
<line x1="842.5" y1="313.5" x2="842.5" y2="305.8" stroke="#d02626" stroke-width="1.4"/>
<line x1="850.5" y1="313.5" x2="850.5" y2="305.7" stroke="#d02626" stroke-width="1.4"/>
<line x1="858.5" y1="313.5" x2="858.5" y2="306.5" stroke="#d02626" stroke-width="1.4"/>
<line x1="866.5" y1="313.5" x2="866.5" y2="307.1" stroke="#d02626" stroke-width="1.4"/>
<polyline points="12.5,333.5 43.0,329.9 76.0,325.7 109.0,322.4 142.0,318.3 175.0,313.4 200.0,309.2 218.0,304.7 244.0,296.9 270.0,292.5 280.0,292.7 301.4,293.6 321.2,296.9 337.8,300.1 354.2,304.3 370.8,309.2 387.2,314.2 403.8,318.3 420.3,321.6 436.8,322.9 470.0,323.0 523.2,323.4 550.3,323.2 577.4,320.5 595.4,319.3 618.0,318.2 658.6,319.8 720.0,320.5 744.5,321.1 766.0,316.6 782.5,311.7 799.0,306.8 815.5,302.6 832.0,299.3 848.5,296.0 865.0,291.1" fill="none" stroke="#1e8a1e" stroke-width="1.15"/>
<polyline points="12.5,332.8 26.5,329.0 36.4,326.6 56.2,325.7 59.5,324.6 72.7,322.9 82.6,320.8 105.7,320.8 109.0,318.6 122.2,316.6 138.7,315.0 150.3,314.2 155.2,312.5 181.6,308.1 191.5,303.1 200.0,301.5 218.0,295.6 231.0,290.9 244.0,289.1 270.0,289.1 280.0,292.7 288.2,292.7 296.5,294.4 306.4,298.5 321.2,302.6 337.8,307.6 354.2,313.4 370.8,317.5 387.2,322.4 403.8,325.7 420.3,326.9 428.5,325.7 445.0,324.9 478.0,323.2 484.8,320.5 491.6,320.5 493.9,323.2 523.2,323.9 525.5,325.0 543.5,325.0 554.8,323.2 563.8,320.5 572.9,318.9 591.0,318.9 595.4,317.1 618.0,317.5 620.3,318.9 633.8,318.9 642.8,320.5 651.9,322.7 688.0,322.7 721.0,321.0 736.3,319.6 749.5,314.2 766.0,307.6 782.5,302.6 799.0,298.5 815.5,295.2 832.0,291.9 848.5,287.8 865.0,284.5" fill="none" stroke="#cc2828" stroke-width="1.45"/>
</g>
<text x="14.5" y="295" font-size="11" fill="#cc2a2a" textLength="29" lengthAdjust="spacingAndGlyphs">MACD</text>
<g clip-path="url(#crsi)">
<line x1="13" y1="349" x2="865" y2="349" stroke="#1c1cac" stroke-width="1.8"/>
<line x1="13" y1="395" x2="865" y2="395" stroke="#1c1cac" stroke-width="1.8"/>
<polyline points="12.6,369.2 20.4,365.3 30.8,364.8 40.0,371.9 46.5,370.6 54.3,369.2 62.0,373.2 77.7,361.4 85.5,369.2 93.3,374.5 103.8,369.2 118.0,363.3 132.4,369.2 141.5,362.7 150.6,367.2 158.4,366.6 160.0,365.0 165.7,361.4 172.5,364.5 179.8,352.5 186.0,350.4 191.2,351.0 196.0,352.5 204.3,352.5 211.0,348.9 216.2,347.3 224.6,346.8 228.2,346.2 233.0,349.4 243.3,360.3 250.6,363.4 257.9,361.4 265.2,364.5 270.4,370.2 275.6,374.4 280.0,373.3 286.0,371.9 296.5,371.9 300.0,374.5 306.5,387.0 313.0,388.3 326.0,388.8 339.0,389.6 345.6,387.0 353.4,394.0 362.5,391.4 374.2,394.0 385.0,394.6 393.8,392.7 409.4,393.2 417.2,383.6 432.8,370.6 448.4,375.8 456.2,374.5 464.0,370.6 471.9,375.8 479.7,371.3 487.5,370.6 495.3,380.2 505.7,381.0 511.0,383.6 521.4,384.9 527.9,388.3 534.4,384.4 543.5,375.8 551.3,362.7 560.4,366.6 573.4,364.0 589.0,369.2 598.5,357.8 606.7,376.0 614.3,376.9 620.4,376.0 628.0,379.0 637.1,379.0 644.7,384.2 652.3,386.6 661.4,378.4 678.1,378.1 684.2,376.0 693.3,369.3 701.0,377.5 708.5,372.3 716.1,373.6 723.7,372.3 732.9,376.0 740.5,366.9 748.0,350.8 758.7,349.6 766.3,350.2 772.4,351.7 781.5,344.7 787.6,344.7 795.2,351.7 802.8,356.2 810.4,352.6 825.6,352.6 836.2,346.5 848.4,344.7 857.5,349.6 865.1,353.2" fill="none" stroke="#f08a3a" stroke-width="1.1"/>
<polyline points="345.6,387 353.4,394" fill="none" stroke="#30c030" stroke-width="1.1"/>
<clipPath id="c70"><rect x="13" y="340" width="870" height="10"/></clipPath>
<polyline points="12.6,369.2 20.4,365.3 30.8,364.8 40.0,371.9 46.5,370.6 54.3,369.2 62.0,373.2 77.7,361.4 85.5,369.2 93.3,374.5 103.8,369.2 118.0,363.3 132.4,369.2 141.5,362.7 150.6,367.2 158.4,366.6 160.0,365.0 165.7,361.4 172.5,364.5 179.8,352.5 186.0,350.4 191.2,351.0 196.0,352.5 204.3,352.5 211.0,348.9 216.2,347.3 224.6,346.8 228.2,346.2 233.0,349.4 243.3,360.3 250.6,363.4 257.9,361.4 265.2,364.5 270.4,370.2 275.6,374.4 280.0,373.3 286.0,371.9 296.5,371.9 300.0,374.5 306.5,387.0 313.0,388.3 326.0,388.8 339.0,389.6 345.6,387.0 353.4,394.0 362.5,391.4 374.2,394.0 385.0,394.6 393.8,392.7 409.4,393.2 417.2,383.6 432.8,370.6 448.4,375.8 456.2,374.5 464.0,370.6 471.9,375.8 479.7,371.3 487.5,370.6 495.3,380.2 505.7,381.0 511.0,383.6 521.4,384.9 527.9,388.3 534.4,384.4 543.5,375.8 551.3,362.7 560.4,366.6 573.4,364.0 589.0,369.2 598.5,357.8 606.7,376.0 614.3,376.9 620.4,376.0 628.0,379.0 637.1,379.0 644.7,384.2 652.3,386.6 661.4,378.4 678.1,378.1 684.2,376.0 693.3,369.3 701.0,377.5 708.5,372.3 716.1,373.6 723.7,372.3 732.9,376.0 740.5,366.9 748.0,350.8 758.7,349.6 766.3,350.2 772.4,351.7 781.5,344.7 787.6,344.7 795.2,351.7 802.8,356.2 810.4,352.6 825.6,352.6 836.2,346.5 848.4,344.7 857.5,349.6 865.1,353.2" fill="none" stroke="#c830dc" stroke-width="1.5" clip-path="url(#c70)"/>
</g>
<text x="14.3" y="354" font-size="11" fill="#ec923c" textLength="15.3" lengthAdjust="spacingAndGlyphs">RSI</text>
<g fill="none" stroke="#b9cad9" stroke-width="1" shape-rendering="crispEdges">
<rect x="12.5" y="38.5" width="871" height="239"/>
<rect x="12.5" y="283.5" width="871" height="53"/>
<rect x="12.5" y="342.5" width="871" height="56"/>
</g>
<rect x="12" y="38" width="31" height="22" fill="#eeeeee"/><rect x="12" y="38" width="31" height="5" fill="#d5d5cf"/>
<rect x="16.5" y="46.5" width="9" height="9" rx="1.5" fill="url(#sqr)" stroke="#9a1a1a"/>
<rect x="29.5" y="46.5" width="9" height="9" rx="1.5" fill="url(#sqb)" stroke="#1a5a8a"/>
<text x="43" y="50" font-size="11" fill="#1818e8" textLength="104" lengthAdjust="spacingAndGlyphs">ential_Moving_Average</text>
<text x="152" y="50" font-size="11" fill="#e02020" textLength="134" lengthAdjust="spacingAndGlyphs">Exponential_Moving_Average</text>
<line x1="12.5" y1="374" x2="12.5" y2="402" stroke="#d0ecec" stroke-width="2"/>
<rect x="13.5" y="375.5" width="61" height="19" rx="1.5" fill="url(#lab)" stroke="#9aaabb"/>
<text x="20" y="389" font-size="11" fill="#e8eef4">Апр 2020</text>
<line x1="196.5" y1="374" x2="196.5" y2="402" stroke="#d0ecec" stroke-width="2"/>
<rect x="197.5" y="375.5" width="62" height="19" rx="1.5" fill="url(#lab)" stroke="#9aaabb"/>
<text x="204" y="389" font-size="11" fill="#e8eef4">Май 2020</text>
<text x="891" y="72" font-size="11" fill="#fffcf4" stroke="#fffcf4" stroke-width="0.3" textLength="32.5" lengthAdjust="spacingAndGlyphs">1.1000</text>
<text x="891" y="115" font-size="11" fill="#fffcf4" stroke="#fffcf4" stroke-width="0.3" textLength="32.5" lengthAdjust="spacingAndGlyphs">1.0950</text>
<text x="891" y="157" font-size="11" fill="#fffcf4" stroke="#fffcf4" stroke-width="0.3" textLength="32.5" lengthAdjust="spacingAndGlyphs">1.0900</text>
<text x="891" y="200" font-size="11" fill="#fffcf4" stroke="#fffcf4" stroke-width="0.3" textLength="32.5" lengthAdjust="spacingAndGlyphs">1.0850</text>
<text x="891" y="242" font-size="11" fill="#fffcf4" stroke="#fffcf4" stroke-width="0.3" textLength="32.5" lengthAdjust="spacingAndGlyphs">1.0800</text>
<rect x="883" y="89" width="48" height="21" fill="#ffffff"/>
<text x="892" y="103" font-size="11" fill="#404048">1.0960</text>
<text x="892" y="319" font-size="11" fill="#fffcf4" stroke="#fffcf4" stroke-width="0.3">+0.000</text>
<text x="891" y="378" font-size="11" fill="#fffcf4" stroke="#fffcf4" stroke-width="0.3">50</text>
<text x="54.6" y="421" font-size="11" fill="#faf6ee" stroke="#faf6ee" stroke-width="0.25" text-anchor="end">28</text>
<text x="54.4" y="421" font-size="11" fill="#faf6ee" stroke="#faf6ee" stroke-width="0.25">/Вт</text>
<text x="102.6" y="421" font-size="11" fill="#faf6ee" stroke="#faf6ee" stroke-width="0.25" text-anchor="end">29</text>
<text x="102.4" y="421" font-size="11" fill="#faf6ee" stroke="#faf6ee" stroke-width="0.25">/Ср</text>
<text x="149.6" y="421" font-size="11" fill="#faf6ee" stroke="#faf6ee" stroke-width="0.25" text-anchor="end">30</text>
<text x="149.4" y="421" font-size="11" fill="#faf6ee" stroke="#faf6ee" stroke-width="0.25">/Чт</text>
<text x="196.6" y="421" font-size="11" fill="#faf6ee" stroke="#faf6ee" stroke-width="0.25" text-anchor="end">1</text>
<text x="196.4" y="421" font-size="11" fill="#faf6ee" stroke="#faf6ee" stroke-width="0.25">/Пт</text>
<text x="243.6" y="421" font-size="11" fill="#faf6ee" stroke="#faf6ee" stroke-width="0.25" text-anchor="end">4</text>
<text x="243.4" y="421" font-size="11" fill="#faf6ee" stroke="#faf6ee" stroke-width="0.25">/Пн</text>
<text x="291.6" y="421" font-size="11" fill="#faf6ee" stroke="#faf6ee" stroke-width="0.25" text-anchor="end">5</text>
<text x="291.4" y="421" font-size="11" fill="#faf6ee" stroke="#faf6ee" stroke-width="0.25">/Вт</text>
<text x="338.6" y="421" font-size="11" fill="#faf6ee" stroke="#faf6ee" stroke-width="0.25" text-anchor="end">6</text>
<text x="338.4" y="421" font-size="11" fill="#faf6ee" stroke="#faf6ee" stroke-width="0.25">/Ср</text>
<text x="385.6" y="421" font-size="11" fill="#faf6ee" stroke="#faf6ee" stroke-width="0.25" text-anchor="end">7</text>
<text x="385.4" y="421" font-size="11" fill="#faf6ee" stroke="#faf6ee" stroke-width="0.25">/Чт</text>
<text x="432.6" y="421" font-size="11" fill="#faf6ee" stroke="#faf6ee" stroke-width="0.25" text-anchor="end">8</text>
<text x="432.4" y="421" font-size="11" fill="#faf6ee" stroke="#faf6ee" stroke-width="0.25">/Пт</text>
<text x="480.6" y="421" font-size="11" fill="#faf6ee" stroke="#faf6ee" stroke-width="0.25" text-anchor="end">11</text>
<text x="480.4" y="421" font-size="11" fill="#faf6ee" stroke="#faf6ee" stroke-width="0.25">/Пн</text>
<text x="527.6" y="421" font-size="11" fill="#faf6ee" stroke="#faf6ee" stroke-width="0.25" text-anchor="end">12</text>
<text x="527.4" y="421" font-size="11" fill="#faf6ee" stroke="#faf6ee" stroke-width="0.25">/Вт</text>
<text x="574.6" y="421" font-size="11" fill="#faf6ee" stroke="#faf6ee" stroke-width="0.25" text-anchor="end">13</text>
<text x="574.4" y="421" font-size="11" fill="#faf6ee" stroke="#faf6ee" stroke-width="0.25">/Ср</text>
<text x="621.6" y="421" font-size="11" fill="#faf6ee" stroke="#faf6ee" stroke-width="0.25" text-anchor="end">14</text>
<text x="621.4" y="421" font-size="11" fill="#faf6ee" stroke="#faf6ee" stroke-width="0.25">/Чт</text>
<text x="669.6" y="421" font-size="11" fill="#faf6ee" stroke="#faf6ee" stroke-width="0.25" text-anchor="end">15</text>
<text x="669.4" y="421" font-size="11" fill="#faf6ee" stroke="#faf6ee" stroke-width="0.25">/Пт</text>
<text x="716.6" y="421" font-size="11" fill="#faf6ee" stroke="#faf6ee" stroke-width="0.25" text-anchor="end">18</text>
<text x="716.4" y="421" font-size="11" fill="#faf6ee" stroke="#faf6ee" stroke-width="0.25">/Пн</text>
<text x="763.6" y="421" font-size="11" fill="#faf6ee" stroke="#faf6ee" stroke-width="0.25" text-anchor="end">19</text>
<text x="763.4" y="421" font-size="11" fill="#faf6ee" stroke="#faf6ee" stroke-width="0.25">/Вт</text>
<text x="810.6" y="421" font-size="11" fill="#faf6ee" stroke="#faf6ee" stroke-width="0.25" text-anchor="end">20</text>
<text x="810.4" y="421" font-size="11" fill="#faf6ee" stroke="#faf6ee" stroke-width="0.25">/Ср</text>
<text x="858.6" y="421" font-size="11" fill="#faf6ee" stroke="#faf6ee" stroke-width="0.25" text-anchor="end">21</text>
<text x="858.4" y="421" font-size="11" fill="#faf6ee" stroke="#faf6ee" stroke-width="0.25">/Чт</text>
</svg></body></html>
